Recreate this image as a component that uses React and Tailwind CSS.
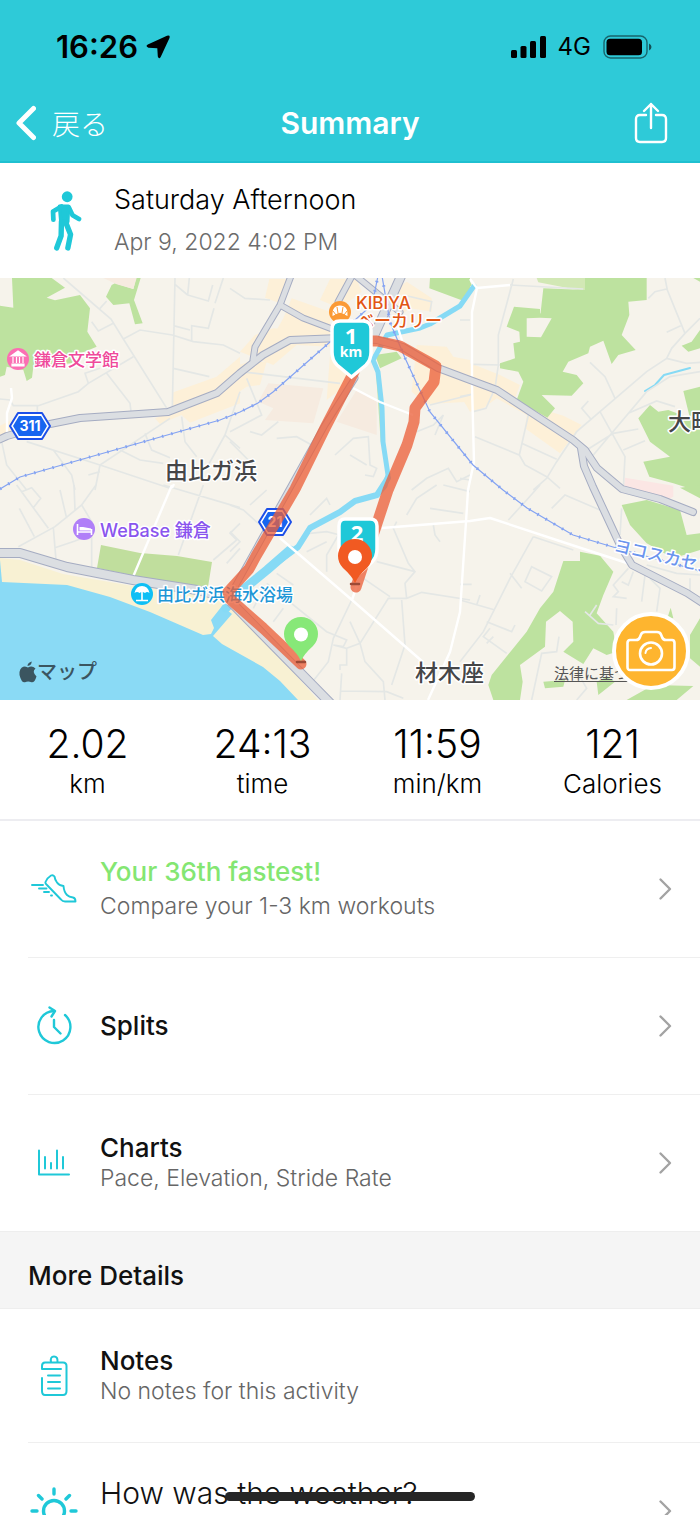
import React from 'react';

const stats = [
  { value: '2.02', label: 'km' },
  { value: '24:13', label: 'time' },
  { value: '11:59', label: 'min/km' },
  { value: '121', label: 'Calories' },
];

const TEAL = '#1fc8d8';

function StatusBar() {
  return (
    <div className="flex items-center justify-between pt-7 pr-12 pl-14 text-black">
      <div className="flex items-center gap-2">
        <span className="text-[31px] leading-[38px] font-semibold">16:26</span>
        <svg width="24" height="24" viewBox="0 0 24 24">
          <path d="M21 0.8 Q24.5 -0.2 23.5 3 L14.8 21.8 Q13 25 11.8 21.5 L11.3 13.2 L2.4 12.7 Q-1 11.4 1.8 9.4 Z" />
        </svg>
      </div>
      <div className="flex items-center gap-3">
        <svg width="35" height="22" viewBox="0 0 35 22">
          <rect x="0" y="14" width="6" height="8" rx="1.5" />
          <rect x="9.5" y="10" width="6" height="12" rx="1.5" />
          <rect x="19" y="5" width="6" height="17" rx="1.5" />
          <rect x="29" y="0" width="6" height="22" rx="1.5" />
        </svg>
        <span className="text-2xl leading-[38px]">4G</span>
        <svg width="49" height="24" viewBox="0 0 49 24">
          <rect x="1" y="1" width="43" height="22" rx="6.5" fill="none" stroke="#000" strokeOpacity="0.5" strokeWidth="1.4" />
          <rect x="3.5" y="3.8" width="35.5" height="16.4" rx="3.5" />
          <path d="M46 8.5 Q48.5 9.5 48.5 12 T46 15.5 Z" fillOpacity="0.6" />
        </svg>
      </div>
    </div>
  );
}

function NavBar() {
  return (
    <nav className="grid grid-cols-3 items-center px-4 pt-9 pb-[17px] text-white">
      <button className="flex items-center gap-4 justify-self-start">
        <svg width="20" height="36" viewBox="0 0 20 36" fill="none" stroke="#fff" strokeWidth="5" strokeLinecap="round" strokeLinejoin="round">
          <path d="M17.5 3.5 L3 18 L17.5 32.5" />
        </svg>
        <span className="font-['Noto_Sans_CJK_JP',sans-serif] text-[28px] leading-9 font-light">戻る</span>
      </button>
      <h1 className="justify-self-center text-[30px] leading-9 font-semibold">Summary</h1>
      <button className="mr-4 justify-self-end" aria-label="Share">
        <svg width="34" height="42" viewBox="0 0 34 42" fill="none" stroke="#fff" strokeWidth="2.4" strokeLinecap="round" strokeLinejoin="round">
          <path d="M12 13 H6 Q2 13 2 17 V36 Q2 40 6 40 H28 Q32 40 32 36 V17 Q32 13 28 13 H22" />
          <path d="M17 26 V2 M10 9 L17 2 L24 9" />
        </svg>
      </button>
    </nav>
  );
}

function WalkIcon() {
  return (
    <svg width="32" height="60" viewBox="150 573 95 178" fill="none" stroke={TEAL} strokeLinecap="round" strokeLinejoin="round">
      <circle cx="201" cy="590" r="16" fill={TEAL} stroke="none" />
      <path d="M178 618 L205 618 L203 664 L182 664 Z" fill={TEAL} strokeWidth="10" />
      <path d="M160 658 L159 634 L184 619 M206 622 L217 645 L236 656" strokeWidth="14" />
      <path d="M184 664 L183 706 L170 742 M196 664 L211 702 L203 742" strokeWidth="16" />
    </svg>
  );
}

// One map unit is one pixel at the 700px layout; land cover and lanes are drawn on 240-unit tiles at 3x
function ActivityMap() {
  return (
    <svg className="block h-auto w-full" viewBox="0 278 700 422" role="img" aria-label="Route map">
      <rect x="0" y="278" width="700" height="422" fill="#f6f3eb" />

      {/* Land cover */}
      <g fill="#bde29f">
        <g transform="translate(0 275) scale(0.33333)">
          <path d="M36 9 H155 L195 38 L140 68 L165 76 L240 60 L270 100 L262 170 L290 215 L230 240 L215 265 L100 275 L96 308 L80 318 L70 285 L20 275 L15 300 L0 305 V92 L40 98 Z" />
          <path d="M335 30 L345 25 L400 42 L408 9 H422 L402 75 L428 145 L405 148 L388 85 L340 90 L318 65 Z" />
          <path d="M310 9 H410 L400 42 L350 28 Z" fill="#f7ebe0" />
          <path d="M520 352 L650 305 L720 245 V385 L570 443 L545 420 L480 447 L465 430 L515 410 Z M0 452 L45 430 V470 L0 490 Z" fill="#fdf0d8" />
        </g>
        <g transform="translate(230 275) scale(0.33333)">
          <g fill="#fdf0d8">
            <path d="M118 12 H170 L150 85 L105 68 Z M300 12 H380 L395 50 L330 100 L270 75 Z M185 70 L300 110 V190 L120 200 L160 130 Z" />
            <path d="M30 230 L75 180 L130 160 L300 170 V215 L200 210 L130 270 Z M0 280 L55 260 L110 260 L90 330 L50 335 L0 370 Z M300 240 H350 V330 L290 375 Z" />
            <path d="M530 20 L560 40 L605 70 V110 L540 100 L500 130 L470 60 Z M560 210 L650 215 L670 245 L720 255 V380 L590 387 L545 350 Z" />
          </g>
          <path d="M115 325 L280 340 L250 445 L105 435 L130 400 L85 380 Z M380 345 L440 380 V480 L320 440 Z" fill="#f6ebe0" />
          <path d="M600 9 H720 V50 L695 76 L598 40 Z M435 240 L500 230 L515 250 L450 280 Z" />
          <path d="M437 280 L447 290 L465 500 L452 500 Z" fill="#c9e6b0" />
        </g>
        <g transform="translate(460 275) scale(0.33333)">
          <path d="M0 255 L45 270 L120 300 L180 330 L165 370 L205 390 L310 422 L365 450 L300 535 L195 460 L200 420 L110 370 L70 400 L30 410 L0 360 Z" fill="#fdf0d8" />
          <path d="M230 9 H380 V50 L235 22 Z" fill="#d2e8b5" />
          <path d="M250 40 L375 45 V9 H560 V75 L505 80 L508 120 L485 180 L527 225 L475 240 L455 267 L430 197 L390 215 L385 235 L325 260 L308 290 L350 300 L370 325 L335 362 L245 360 L285 400 L262 428 L170 375 L190 320 L175 290 L120 280 V265 L165 250 L160 205 L180 200 L178 170 L140 155 L162 95 L240 102 V115 L275 130 L243 187 L200 185 L205 130 L240 130 Z" />
          <path d="M0 9 H25 L35 30 L0 68 Z M720 165 L695 200 L665 212 L685 230 L720 220 Z M700 9 H720 V20 Z" />
          <path d="M720 335 L670 348 L690 430 L625 405 L595 410 L570 390 L535 430 L570 500 L630 545 L550 560 L568 605 L640 625 L720 650 Z" />
          <path d="M200 130 L240 128 L275 130 L243 187 L200 185 Z" fill="#f6f3eb" />
          <path d="M495 608 L640 632 L640 665 L625 673 L490 645 Z" fill="#fbe6e4" />
        </g>
        <g transform="translate(460 485) scale(0.33333)">
          <path d="M310 228 H360 V200 L420 212 L460 260 L430 330 L410 385 L460 440 L470 500 L440 510 L400 490 L370 537 L310 500 L340 470 L338 410 L300 378 L258 410 L255 485 L180 540 L188 590 L180 645 H100 L85 600 L95 570 L200 440 L240 370 L280 320 Z" />
          <path d="M485 60 L560 45 L660 75 L680 150 L720 145 V195 L640 220 L560 175 L510 120 Z M660 8 L720 0 V40 Z" />
          <path d="M250 590 L315 585 L310 605 L255 610 Z M410 590 L440 575 L465 590 L415 630 Z M500 645 L580 600 L700 603 L650 645 Z M690 450 L720 400 V545 L690 520 Z M632 368 L622 400 L640 400 Z" />
        </g>
      </g>

      {/* Coast */}
      <path d="M0 558 L20 560 L63 574 L133 586 L228 598 L318 700 H290 L205 650 L0 600 Z" fill="#f8f1d3" />
      <path d="M0 560 L2 582 L67 585 L110 597 L150 612 L203 635 L211 634 L214 628 L211 620 L222 606 L232 614 L213 636 L222 644 L263 667 L280 681 L298 700 H0 Z" fill="#8adaf5" />
      <path d="M101 545 L140 553 L177 556 L212 562 L208 587 L140 577 L97 568 Z" fill="#c0de9d" />

      {/* Rivers */}
      <g fill="none" stroke="#86daf5" strokeLinejoin="round" strokeLinecap="round">
        <path d="M474 286 L460 306 L430 324 L420 328 L387 335 L373 360 L378 372 L382 408 L383 442 L388 475 L385 486 L377 495" strokeWidth="5" />
        <path d="M388 478 L377 495 L355 501 L340 512 L310 528 L298 547 L267 570 L247 586" strokeWidth="6" />
        <path d="M290 550 L267 570 L240 592 L226 608" strokeWidth="9" />
        <path d="M645 391 L655 385 L664 375 L690 368" strokeWidth="2" />
      </g>

      {/* Lanes */}
      <g fill="none" stroke="#e4e7e5" strokeWidth="5">
        <path
          transform="translate(0 275) scale(0.33333)"
          d="M190 9 L333 132 L370 192 L510 415 M525 9 L517 400 M568 9 L563 60 L625 78 L638 30 M525 28 L563 60 M670 9 L645 85 M520 152 L570 165 M575 200 V152 L625 160 L642 100 M370 192 L420 165 L517 180 L580 200 L670 210 L720 235 M520 280 L628 305 M275 140 L295 168 L340 145 M300 100 L320 78 M0 372 L30 375 L40 392 H115 L235 350 L265 325 L400 245 M265 325 L255 295 L300 280 M320 295 L390 385 L393 410 M112 390 V430 M510 430 L300 570 L285 645 M80 500 L300 570 L510 640 M160 525 L215 600 L225 645 M435 475 L455 525 L510 548 M360 525 L420 555 L490 565 M545 425 L555 500 L590 545 M720 350 L675 480 L720 520 M675 480 L625 570 M5 500 L20 570 L80 645 M265 600 L300 590"
        />
        <path
          transform="translate(230 275) scale(0.33333)"
          d="M50 292 L330 325 M50 310 L95 420 L0 470 M145 440 L95 480 L60 470 M140 490 L200 485 L245 510 M245 520 L290 450 L345 340 M315 540 L370 490 L415 485 L420 570 L440 580 L430 605 L405 600 M410 570 L360 540 M560 470 L610 450 L640 420 L615 480 M720 360 L600 390 M520 60 L605 80 L600 110 M720 600 L680 620 L655 580 L590 610 L545 645 M0 40 L45 70 L120 75 M0 500 L70 570"
        />
        <path
          transform="translate(460 275) scale(0.33333)"
          d="M160 12 L115 180 V270 L105 340 L78 400 L40 410 M0 135 H30 M0 365 L35 358 M40 268 L120 270 M150 30 L370 42 M615 9 L622 45 L675 175 M565 70 L585 50 L620 42 M620 172 L662 152 M720 130 L675 175 L635 220 L620 250 L560 290 L350 470 L290 560 L260 610 L220 645 M620 250 L680 265 L720 262 M720 290 L630 305 L560 350 L400 540 M390 262 L435 305 L465 370 M385 378 L365 400 L395 435 M420 410 L495 545 L490 640 M505 415 L590 378 L645 395 M380 525 L460 475 L535 462 M490 525 L555 497 M45 485 L178 540 L205 420 M178 540 L195 570 L260 605 L300 640 M185 505 L290 553 M0 610 L30 615"
        />
        <path
          transform="translate(0 485) scale(0.33333)"
          d="M50 0 L145 130 M65 20 L95 8 L122 40 L100 68 M58 70 L103 155 M55 185 L165 125 L245 60 L288 0 M180 15 L200 100 M222 0 L225 75 M160 128 L168 225 M165 188 L225 168 L270 150 M245 60 L275 110 L275 245 M490 0 L720 68 M610 0 L535 210 M720 115 L690 145 L710 165 L640 225 M720 190 L680 235"
        />
        <path
          transform="translate(230 485) scale(0.33333)"
          d="M0 60 L40 75 L90 120 M0 140 L30 170 L0 200 M110 15 L60 60 M240 145 L290 140 L330 150 M230 200 L290 170 M290 260 L290 210 L325 150 M140 265 L190 300 M110 295 L290 440 L350 465 L340 485 L310 480 M85 340 L70 370 M160 370 L130 410 M365 345 L310 460 L295 530 L240 600 M310 480 L350 490 L350 540 L330 540 V555 M350 490 L390 475 L475 340 L530 340 L575 322 L720 345 M390 475 L405 530 L460 590 L465 645 M390 475 L360 410 M530 340 L525 295 L555 260 L535 235 L490 130 L500 110 M555 260 L440 230 M400 280 L480 335 M515 345 L525 480 L485 600 M335 565 L330 645 M330 618 L470 620 L520 640 M610 120 L615 150 L630 170 M530 90 L560 40 L620 0 M720 20 L640 0 M600 70 L700 85 M240 90 L290 40 L300 60"
        />
        <path
          transform="translate(460 485) scale(0.33333)"
          d="M145 105 L200 45 L240 0 M275 70 L315 30 L350 45 L420 75 M480 150 L485 70 M220 155 L150 280 L70 440 L0 530 M220 155 L340 195 M215 245 L275 275 L245 318 L195 290 Z M150 265 L185 310 M0 298 H35 M0 345 L105 375 M60 330 L50 360 M80 410 L155 440 L165 420 M90 430 L70 455 L140 505 M80 475 L100 455 M375 380 L415 415 L460 420 M390 390 L410 360 M215 645 L245 505 L290 500 L297 455 M360 575 L380 610 L350 645 M720 270 L650 265 L560 240 M505 250 L460 300 L475 320 L460 335 L500 340 M520 260 L505 300 L485 290 M555 270 L545 350 M570 280 L600 310 L590 380 M470 370 L468 420 M690 280 L690 330"
        />
      </g>

      {/* White streets */}
      <g fill="none" stroke="#fff" strokeWidth="2.4" strokeLinejoin="round">
        <path d="M11 388 L12 398 L7 413 V432 M172 485 L133 577 M172 488 L174 484" />
        <path d="M280 538 L352 600 L423 662 M352 600 L358 582 M382 528 L470 521 L490 518 L587 550 L630 564" />
        <path d="M353 388 L380 402 L413 415 M395 318 L405 350" />
        <path d="M470 279 L477 288 L510 285 M477 288 L472 312 V385 L474 462 L468 490 L466 522 L460 612 L450 652 L428 700" />
      </g>

      {/* Main roads: casing, then surface */}
      {[
        { stroke: '#a5acc2', extra: 2 },
        { stroke: '#dbdee2', extra: 0 },
      ].map(({ stroke, extra }) => (
        <g key={stroke} fill="none" stroke={stroke} strokeLinejoin="round" strokeLinecap="round">
          <path strokeWidth={6 + extra} d="M-4 441 L7 436 L50 424 L80 418 L168 412 L217 393 L240 373 L263 355 L290 340 L340 338 L377 340 L403 347 L438 368 L470 380 L497 390 L573 440 L585 450 L597 468 L622 489 L660 499 L693 512" />
          <path strokeWidth={6 + extra} d="M581 448 L584 466 L593 487 L620 545 L632 565 L687 593 L704 604" />
          <path strokeWidth={5 + extra} d="M291 276 L280 305 L255 347 L253 360 M280 305 L303 318 L340 332 M352 276 L338 302 V320 M356 276 L400 312 M355 378 L325 425 L232 592" />
          <path strokeWidth={8 + extra} d="M402 274 L373 338" />
          <path strokeWidth={8 + extra} d="M-4 553 H20 L67 567 L133 580 L197 590 L226 597 L335 708" />
        </g>
      ))}

      {/* Railway */}
      <g fill="none" stroke="#84a3f2">
        <g strokeWidth="1.2">
          <path d="M0 489 L20 477 L97 455 L220 420 L240 412 L258 403 L273 392 L330 342 L372 305 L378 276 M382 276 L390 322 L405 358 L430 412 L473 465 L503 490 L527 508 L573 535 L613 547 L660 560 L704 572" />
        </g>
        <g strokeWidth="3" strokeDasharray="1.5 8">
          <path d="M0 489 L20 477 L97 455 L220 420 L240 412 L258 403 L273 392 L330 342 L372 305 L378 276" />
          <path d="M382 276 L390 322 L405 358 L430 412 L473 465 L503 490 L527 508 L573 535 L613 547 L660 560 L704 572" />
        </g>
      </g>

      {/* Road shields */}
      {[
        { x: 30, y: 426, w: 20, label: '311' },
        { x: 275, y: 522, w: 16, label: '21' },
      ].map(({ x, y, w, label }) => (
        <g key={label} transform={`translate(${x} ${y})`}>
          <path d={`M${-w} 0 L${8 - w} -13 H${w - 8} L${w} 0 L${w - 8} 13 H${8 - w} Z`} fill="#fff" stroke="#1c4fe8" strokeWidth="2" strokeLinejoin="round" />
          <path d={`M${3 - w} 0 L${9 - w} -10 H${w - 9} L${w - 3} 0 L${w - 9} 10 H${9 - w} Z`} fill="#1765f0" />
          <text y="5" textAnchor="middle" fontSize="14" fontWeight="700" fill="#fff">{label}</text>
        </g>
      ))}

      {/* Place names */}
      <g className="font-['Inter','Noto_Sans_CJK_JP',sans-serif] font-medium" stroke="#fff" strokeWidth="3" strokeLinejoin="round" paintOrder="stroke">
        <text x="34" y="366" fontSize="17" fill="#ef4a9b">鎌倉文学館</text>
        <text x="356" y="309" fontSize="17" fill="#e25614">KIBIYA</text>
        <text x="357" y="327" fontSize="17" fill="#e25614">ベーカリー</text>
        <text x="165" y="479" fontSize="23" fill="#454648">由比ガ浜</text>
        <text x="668" y="430" fontSize="23" fill="#454648">大町</text>
        <text x="415" y="681" fontSize="23" fill="#454648">材木座</text>
        <text x="100" y="537" fontSize="18" fill="#8a55ee">WeBase 鎌倉</text>
        <text x="157" y="601" fontSize="17" fill="#1e96d6">由比ガ浜海水浴場</text>
        <text transform="translate(613 551) rotate(13)" fontSize="17" fill="#6b95ee">ヨコスカセン</text>
      </g>

      {/* Place badges */}
      <circle cx="18" cy="359" r="11" fill="#fb6fb3" />
      <path d="M11 356 L18 351 L25 356 Z M12 364 H24 V366 H12 Z M13 357 V363 M16.5 357 V363 M19.5 357 V363 M23 357 V363" fill="#fff" stroke="#fff" strokeWidth="1.2" />
      <circle cx="340" cy="312" r="11" fill="#fb9a35" />
      <path d="M332.5 316 Q332 308 336 306.5 Q340 304.5 344 306.5 Q348 308 347.5 316 L344.5 314.5 Q340 311 335.5 314.5 Z" fill="#fff" />
      <path d="M337 307 L338 313 M343 307 L342 313 M333 311 L336 315 M347 311 L344 315" stroke="#fb9a35" strokeWidth="1" />
      <circle cx="84" cy="529" r="11" fill="#b07ff8" />
      <path d="M77.5 524 V535 M77.5 532 H91.5 V535 M91.5 532 V529" fill="none" stroke="#fff" strokeWidth="1.6" />
      <path d="M79.5 527 H83 L91 528.5 V530.5 H79.5 Z" fill="#fff" />
      <circle cx="142" cy="594" r="11" fill="#0fbff5" />
      <path d="M134.5 593 Q136 586 142 586 Q148 586 149.5 593 Q147 591 145 593 Q142 591 139.5 593 Q137 591 134.5 593 Z" fill="#fff" />
      <path d="M142 592 V600 M136 600.5 H148" stroke="#fff" strokeWidth="1.6" />

      {/* Recorded route */}
      <g fill="none" stroke="#eb5f38" strokeOpacity="0.76" strokeWidth="11" strokeLinecap="round" strokeLinejoin="round">
        <path d="M301 664 L263 628 L230 599 L228 592 L249 569 L256 556 L295 489 L324 430 L354 372 L366 341 L377 341 L400 346 L436 366 L434 382 L415 408 L414 422 L407 445 L388 490 L356 587" />
      </g>
      <path d="M297 662 H305 M351 584 H359" stroke="#9c4a35" strokeWidth="2.5" strokeLinecap="round" />

      {/* Kilometre markers */}
      <g className="font-['Noto_Sans',sans-serif] font-bold" fill="#fff" textAnchor="middle">
        <path d="M340 321 H363 Q371 321 371 329 V352 Q371 360 366 365 L351.5 377 L337 365 Q332 360 332 352 V329 Q332 321 340 321 Z" fill={TEAL} stroke="#fff" strokeWidth="3.5" />
        <text x="351" y="344" fontSize="22">1</text>
        <text x="351" y="357" fontSize="14">km</text>
        <path d="M345 519 H370 Q377 519 377 526 V549 Q377 557 372 562 L358.5 574 L344 562 Q339 557 339 549 V526 Q339 519 345 519 Z" fill={TEAL} stroke="#fff" strokeWidth="3.5" />
        <text x="357" y="541" fontSize="22">2</text>
      </g>

      {/* Finish and start pins */}
      <path d="M355 583 Q352 576 343 568 A17 17 0 1 1 367 568 Q358 576 355 583 Z" fill="#f15a22" />
      <circle cx="355" cy="557" r="7" fill="#fff" />
      <path d="M301 661 Q298 654 289 646 A17 17 0 1 1 313 646 Q304 654 301 661 Z" fill="#87e878" />
      <circle cx="301" cy="634.5" r="7" fill="#fff" />

      {/* Map provider mark */}
      <g fill="#3b5560">
        <path d="M28 667.5 Q32 665 35.5 668.5 Q31.5 671.5 36.5 676.5 Q34.5 683 31.500 682.3 Q28 680.8 25 682.3 Q21.5 683 19.5 675 Q19 667.5 24 666.5 Q26 666.5 28 667.5 Z" />
        <path d="M27.5 666 Q27.5 662.5 31.8 661.5 Q31.500 665.5 27.5 666 Z" />
        <text x="37" y="679" fontSize="20" className="font-['Noto_Sans_CJK_JP',sans-serif] font-medium">マップ</text>
      </g>
    </svg>
  );
}

function CameraIcon() {
  return (
    <svg width="50" height="42" viewBox="0 0 50 42" fill="none" stroke="#fff" strokeWidth="2.6" strokeLinejoin="round" strokeLinecap="round">
      <path d="M4 10 H10 Q13 10 14 7 L15 4.5 Q16 2 19 2 H31 Q34 2 35 4.5 L36 7 Q37 10 40 10 H46 Q48.5 10 48.5 13 V37 Q48.5 40 46 40 H4 Q1.5 40 1.5 37 V13 Q1.5 10 4 10 Z" />
      <circle cx="25" cy="23.5" r="11" />
      <path d="M19.5 23 Q20 18.5 25 18" strokeWidth="2" />
    </svg>
  );
}

function Chevron() {
  return (
    <svg className="shrink-0" width="14" height="24" viewBox="0 0 14 24" fill="none" stroke="#a3a3a3" strokeWidth="2.4" strokeLinecap="round" strokeLinejoin="round">
      <path d="M2.5 2.5 L12 12 L2.5 21.5" />
    </svg>
  );
}

function ShoeIcon() {
  return (
    <svg width="46" height="30" viewBox="31 877 46 30" fill="none" stroke={TEAL} strokeWidth="1.9" strokeLinecap="round" strokeLinejoin="round">
      <path d="M45.5 885 Q47 881 51 878.5 Q53 877.5 54.5 879.5 Q55 883 57 885.5 Q59 888.5 63.5 889 Q64 895 67 898 Q69 900 73 900.5 Q75.5 901 75.5 904.5 H65 Q62.5 904.5 61 902.5 L47 888 Q45 886.5 45.5 885 Z" />
      <path d="M32 888 H43 M39 891.5 H46.5 M44 895 H49 M51 898.5 H52" />
    </svg>
  );
}

function SplitsIcon() {
  return (
    <svg width="36" height="40" viewBox="36 1008 36 40" fill="none" stroke={TEAL} strokeWidth="2.4" strokeLinecap="round" strokeLinejoin="round">
      <path d="M65 1017 A16 16 0 1 1 54 1013" />
      <path d="M49.5 1009.5 L55 1013 L51.5 1018.5 M54 1022 V1029 L60.5 1035.5" />
    </svg>
  );
}

function ChartIcon() {
  return (
    <svg width="34" height="28" viewBox="39 1150 34 28" fill="none" stroke={TEAL} strokeWidth="2" strokeLinecap="round" strokeLinejoin="round">
      <path d="M41 1151.5 V1175.5 H71 M47 1158 V1169.5 M53 1164 V1169.5 M59 1151.5 V1169.5 M65 1158 V1169.5" />
    </svg>
  );
}

function NotesIcon() {
  return (
    <svg width="28" height="42" viewBox="42 1355 28 42" fill="none" stroke={TEAL} strokeWidth="2" strokeLinecap="round" strokeLinejoin="round">
      <path d="M44 1369 H63 M44 1369 V1366 Q44 1362.5 47 1362.5 H65 Q68.5 1362.5 68.5 1366 V1391 Q68.5 1395 65 1395 H47 Q44 1395 44 1391 V1378" />
      <path d="M53 1362 Q52 1356.5 56 1356.5 T59.5 1362 M50 1375.5 H62 M50 1382 H62 M50 1388.5 H62" />
    </svg>
  );
}

function SunIcon() {
  return (
    <svg width="48" height="48" viewBox="-24 -24 48 48" fill="none" stroke={TEAL} strokeWidth="3.4" strokeLinecap="round">
      <circle r="10.5" />
      <path d="M0 -22 V-17 M0 22 V17 M-22 0 H-17 M22 0 H17 M-15.5 -15.5 L-12 -12 M15.5 -15.5 L12 -12 M-15.5 15.5 L-12 12 M15.5 15.5 L12 12" />
    </svg>
  );
}

function Row({ icon, title, sub, titleClass = 'text-[#111]', gapClass = '', heightClass = 'min-h-34', chevron = true }) {
  return (
    <button className={`flex w-full items-center pl-7 text-left ${heightClass}`}>
      <span className="flex w-[52px] shrink-0 justify-center">{icon}</span>
      <span className={`ml-5 flex flex-1 flex-col ${gapClass}`}>
        <span className={`text-[26px] leading-[30px] font-medium ${titleClass}`}>{title}</span>
        {sub && <span className="text-[23px] leading-[30px] font-light text-[#666]">{sub}</span>}
      </span>
      {chevron && <span className="mr-7"><Chevron /></span>}
    </button>
  );
}

export default function App() {
  return (
    <div className="h-screen overflow-hidden bg-white font-['Inter','Noto_Sans_CJK_JP',sans-serif] text-[#111]">
      <header className="border-b-2 border-[#1fc0d0] bg-[#2ecad8]">
        <StatusBar />
        <NavBar />
      </header>

      <section className="flex items-center gap-8 pt-4 pb-[15px] pl-[50px]">
        <WalkIcon />
        <div>
          <h2 className="text-[27px] leading-[42px] font-light text-black">Saturday Afternoon</h2>
          <p className="text-[23px] leading-[42px] font-light text-[#6b6b6b]">Apr 9, 2022 4:02 PM</p>
        </div>
      </section>

      <section className="relative overflow-hidden">
        <ActivityMap />
        <a href="#legal" className="absolute right-0 bottom-4 w-[146px] overflow-hidden font-['Noto_Sans_CJK_JP',sans-serif] text-[15px] leading-[22px] whitespace-nowrap text-[#555] underline underline-offset-2">
          法律に基づく情報
        </a>
        <button aria-label="Add photo" className="absolute right-[10px] bottom-[10px] flex size-[78px] items-center justify-center rounded-full border-4 border-white bg-[#feb52f]">
          <CameraIcon />
        </button>
      </section>

      <section className="grid grid-cols-4 border-b-2 border-[#ededf1] pt-6 pb-[19px] text-center font-light text-black">
        {stats.map(({ value, label }) => (
          <div key={label}>
            <div className="text-[39px] leading-10">{value}</div>
            <div className="mt-1 text-[26px] leading-8">{label}</div>
          </div>
        ))}
      </section>

      <section>
        <Row icon={<ShoeIcon />} title="Your 36th fastest!" sub="Compare your 1-3 km workouts" titleClass="text-[#84e672]" gapClass="gap-1" />
        <hr className="ml-7 border-[#efefef]" />
        <Row icon={<SplitsIcon />} title="Splits" />
        <hr className="ml-7 border-[#efefef]" />
        <Row icon={<ChartIcon />} title="Charts" sub="Pace, Elevation, Stride Rate" />
      </section>

      <h2 className="border-y border-[#eee] bg-[#f5f5f5] pt-7 pb-4 pl-7 text-[26px] leading-8 font-medium">More Details</h2>

      <section>
        <Row icon={<NotesIcon />} title="Notes" sub="No notes for this activity" heightClass="min-h-[133px]" chevron={false} />
        <hr className="ml-7 border-[#efefef]" />
        <button className="flex h-34 w-full items-center pl-7 text-left">
          <span className="flex w-[52px] shrink-0 justify-center"><SunIcon /></span>
          <span className="ml-5 flex-1 self-start pt-8 text-[30px] leading-9 font-light">How was the weather?</span>
          <span className="mr-7"><Chevron /></span>
        </button>
      </section>

      {/* Home indicator */}
      <div className="fixed bottom-[14px] left-1/2 h-[9px] w-[250px] -translate-x-1/2 rounded-full bg-[#262626]" />
    </div>
  );
}
